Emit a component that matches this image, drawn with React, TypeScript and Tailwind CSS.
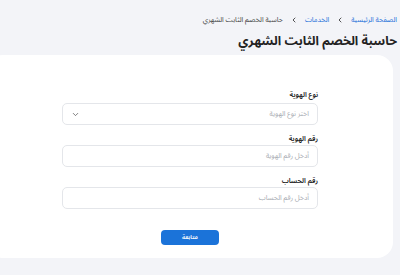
import { ChevronDown, ChevronLeft } from "lucide-react";

const fields = [
  { label: "رقم الهوية", placeholder: "أدخل رقم الهوية" },
  { label: "رقم الحساب", placeholder: "أدخل رقم الحساب" },
];

export default function App() {
  return (
    <div
      dir="rtl"
      className="h-[275px] w-[400px] overflow-hidden bg-[#f3f4f8] text-[#1f2329]"
      style={{ fontFamily: '"Noto Sans Arabic", "Noto Sans", "DejaVu Sans", sans-serif' }}
    >
      <header className="pr-[3px] pt-[13px]">
        <nav className="flex h-[13px] items-center gap-[7px] text-[7px] leading-[13px]">
          <span className="text-[#1b6fd8]">الصفحة الرئيسية</span>
          <ChevronLeft className="h-[8px] w-[8px] text-[#333]" strokeWidth={2.5} />
          <span className="text-[#1b6fd8]">الخدمات</span>
          <ChevronLeft className="h-[8px] w-[8px] text-[#333]" strokeWidth={2.5} />
          <span className="text-[#444]">حاسبة الخصم الثابت الشهري</span>
        </nav>
        <h1 className="mt-[4px] text-[12.5px] font-bold leading-[22px] text-[#222]">
          حاسبة الخصم الثابت الشهري
        </h1>
      </header>

      <section className="ml-[-13px] mr-[7px] mt-[3px] h-[203px] rounded-2xl bg-white pt-[35px]">
        <form className="mx-auto flex w-[256px] flex-col">
          <label className="text-[7px] font-semibold leading-[10px] text-[#222]">نوع الهوية</label>
          <div className="mt-[3px] flex h-[22px] items-center justify-between rounded-[5px] border border-[#e4e6ea] px-[8px]">
            <span className="text-[7px] text-[#a7abb2]">اختر نوع الهوية</span>
            <ChevronDown className="h-[9px] w-[9px] text-[#555]" strokeWidth={2} />
          </div>
          {fields.map((f) => (
            <div key={f.label} className="mt-[9px] flex flex-col">
              <label className="text-[7px] font-semibold leading-[10px] text-[#222]">{f.label}</label>
              <div className="mt-[1px] flex h-[22px] items-center rounded-[5px] border border-[#e4e6ea] px-[8px]">
                <span className="text-[7px] text-[#a7abb2]">{f.placeholder}</span>
              </div>
            </div>
          ))}
          <button
            type="button"
            className="mx-auto mt-[21px] h-[15px] w-[58px] rounded-[4px] bg-[#1b73d9] text-[6px] font-semibold text-white"
          >
            متابعة
          </button>
        </form>
      </section>
    </div>
  );
}
